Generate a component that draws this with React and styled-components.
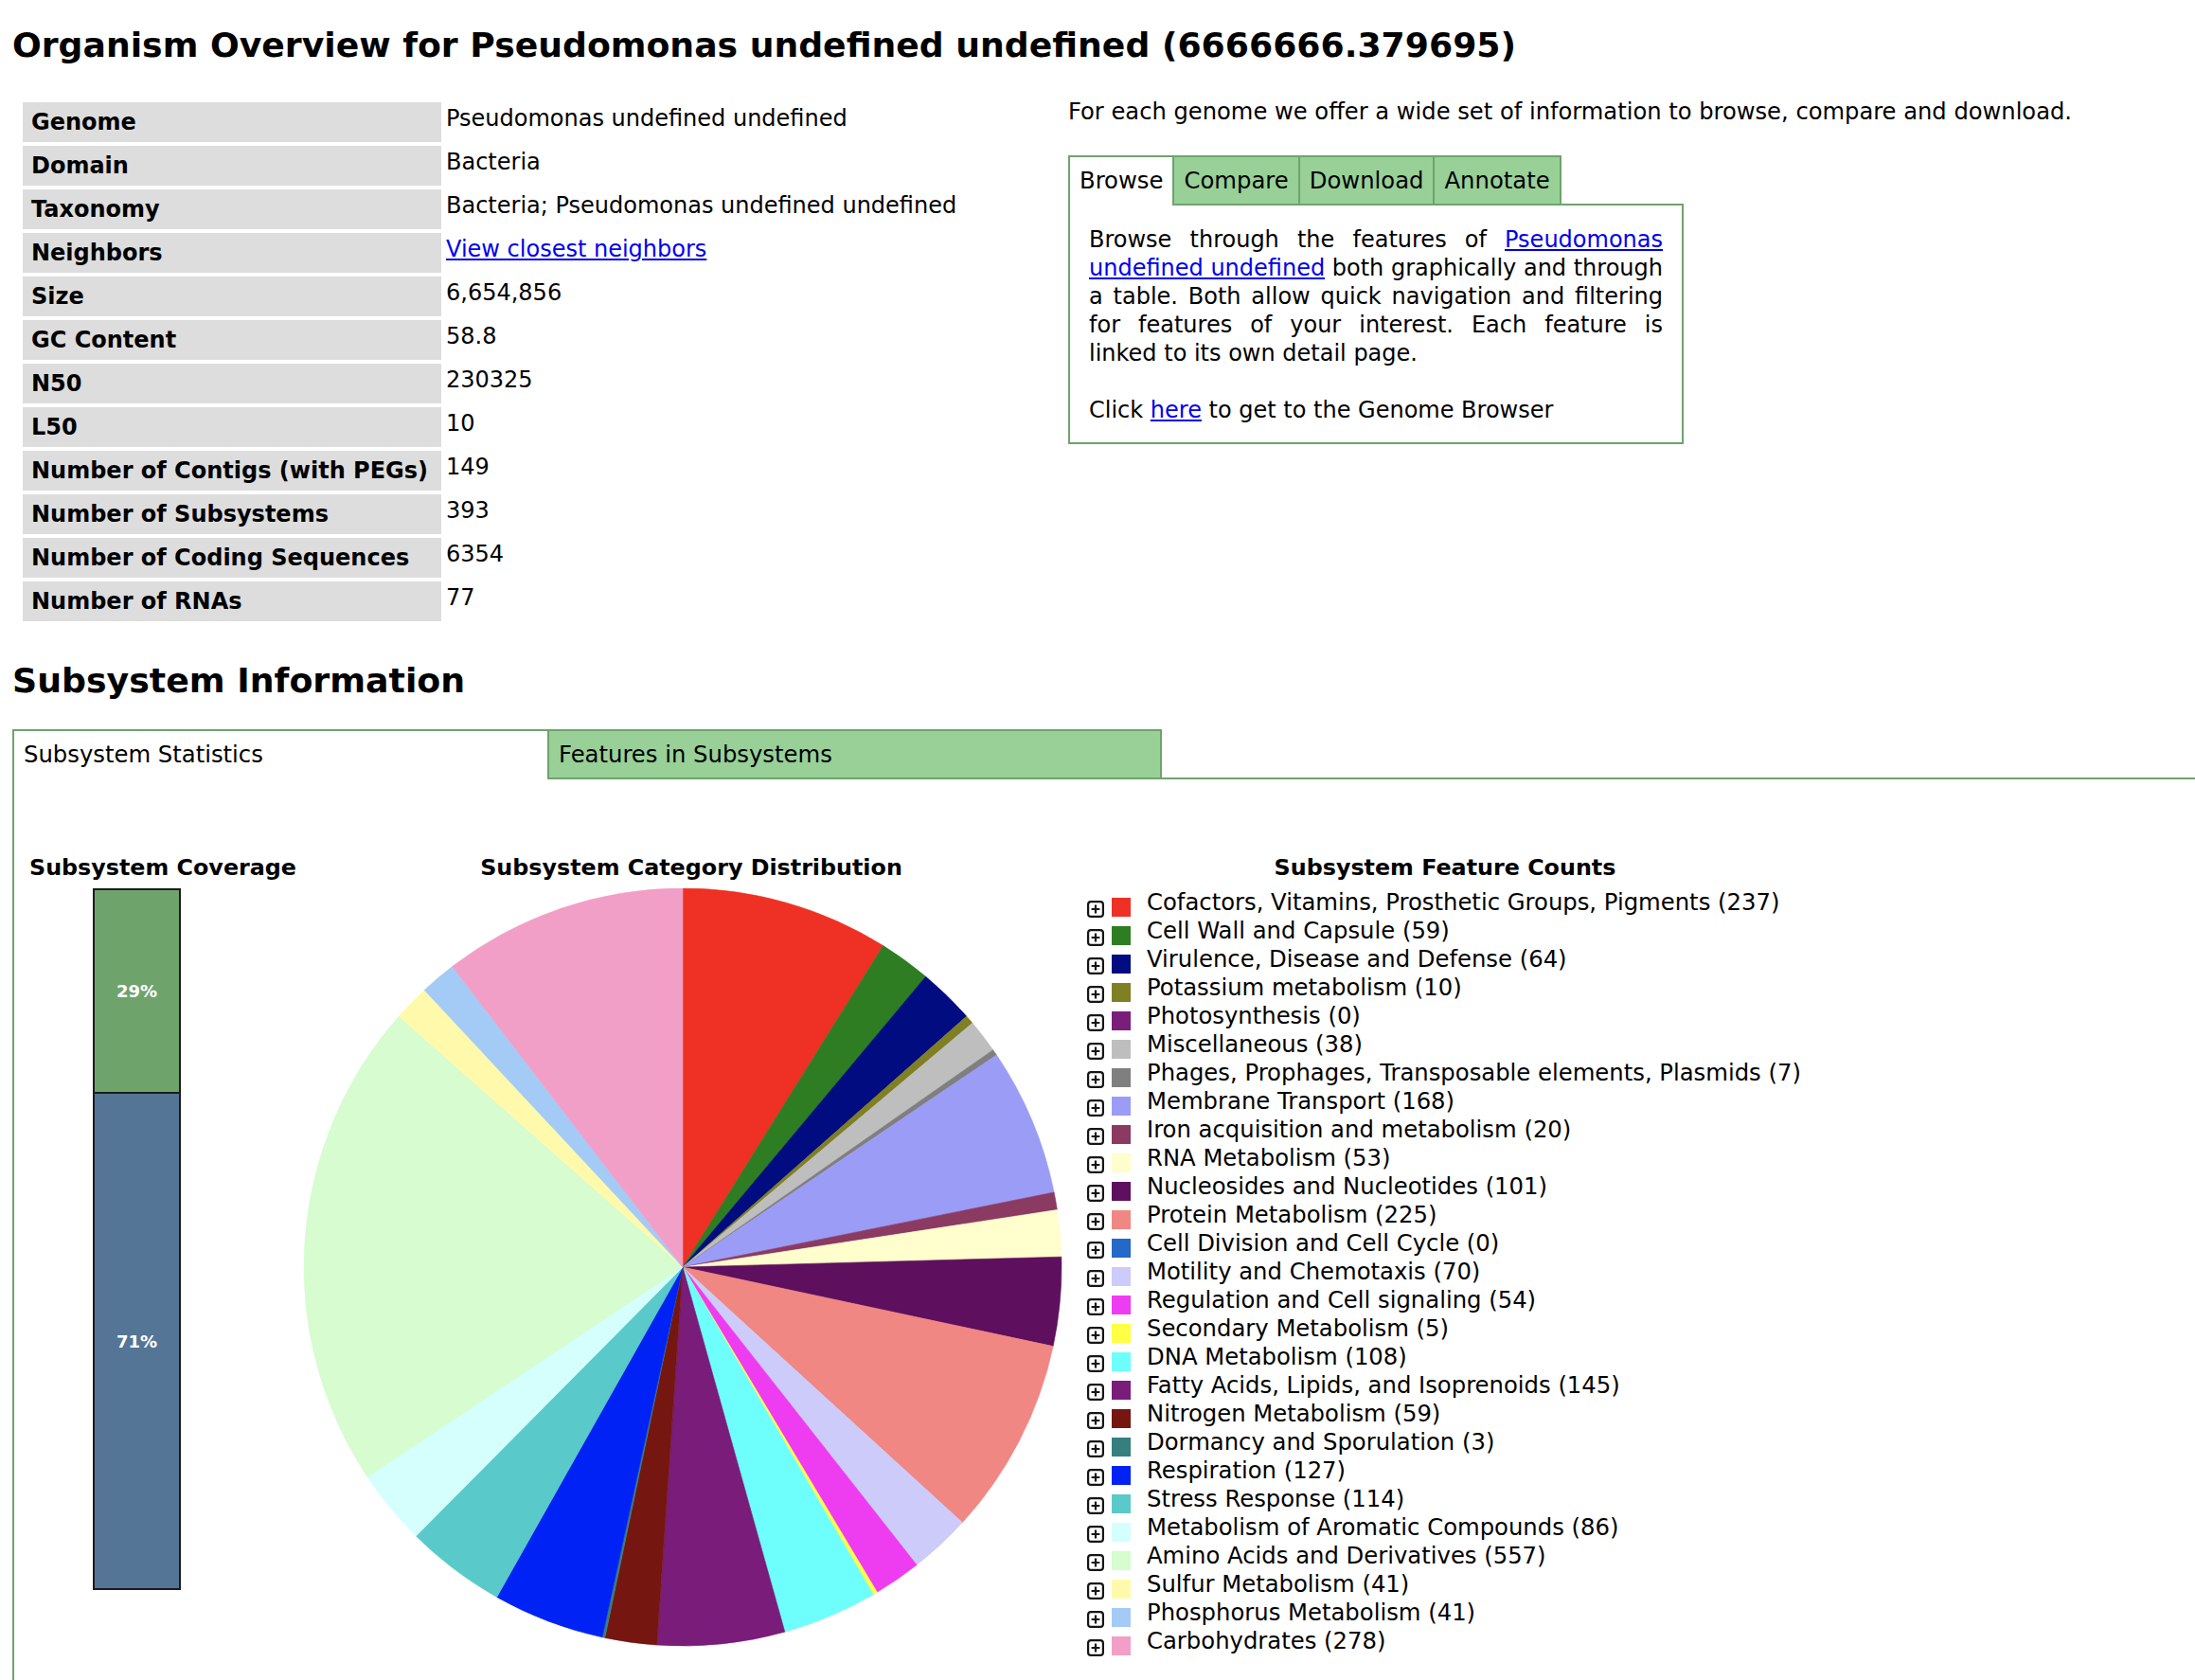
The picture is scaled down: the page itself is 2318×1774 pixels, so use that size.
import React from 'react';
import styled, { createGlobalStyle } from 'styled-components';

const GREEN_LINE = '#6fa36c';
const GREEN_TAB = '#98d098';

const GlobalStyle = createGlobalStyle`
	html, body {
		margin: 0;
		padding: 0;
		overflow: hidden;
		background: #fff;
	}
	body {
		font-family: "DejaVu Sans", Verdana, sans-serif;
		font-size: 24.2px;
		color: #000;
	}
	a {
		color: #0000ee;
		text-decoration: underline;
	}
`;

const overview = [
	['Genome', 'Pseudomonas undefined undefined'],
	['Domain', 'Bacteria'],
	['Taxonomy', 'Bacteria; Pseudomonas undefined undefined'],
	['Neighbors', <a href="#">View closest neighbors</a>],
	['Size', '6,654,856'],
	['GC Content', '58.8'],
	['N50', '230325'],
	['L50', '10'],
	['Number of Contigs (with PEGs)', '149'],
	['Number of Subsystems', '393'],
	['Number of Coding Sequences', '6354'],
	['Number of RNAs', '77'],
];

const categories = [
	{ name: 'Cofactors, Vitamins, Prosthetic Groups, Pigments', count: 237, color: '#ee3124' },
	{ name: 'Cell Wall and Capsule', count: 59, color: '#2e7d23' },
	{ name: 'Virulence, Disease and Defense', count: 64, color: '#000c7f' },
	{ name: 'Potassium metabolism', count: 10, color: '#7f7f23' },
	{ name: 'Photosynthesis', count: 0, color: '#7b1e7b' },
	{ name: 'Miscellaneous', count: 38, color: '#bebebe' },
	{ name: 'Phages, Prophages, Transposable elements, Plasmids', count: 7, color: '#7f7f7f' },
	{ name: 'Membrane Transport', count: 168, color: '#9b9cf6' },
	{ name: 'Iron acquisition and metabolism', count: 20, color: '#8b3a62' },
	{ name: 'RNA Metabolism', count: 53, color: '#fffecc' },
	{ name: 'Nucleosides and Nucleotides', count: 101, color: '#5e0f5e' },
	{ name: 'Protein Metabolism', count: 225, color: '#f08783' },
	{ name: 'Cell Division and Cell Cycle', count: 0, color: '#2468c8' },
	{ name: 'Motility and Chemotaxis', count: 70, color: '#cccbfa' },
	{ name: 'Regulation and Cell signaling', count: 54, color: '#ee3cf0' },
	{ name: 'Secondary Metabolism', count: 5, color: '#ffff44' },
	{ name: 'DNA Metabolism', count: 108, color: '#6efffd' },
	{ name: 'Fatty Acids, Lipids, and Isoprenoids', count: 145, color: '#7a1c7a' },
	{ name: 'Nitrogen Metabolism', count: 59, color: '#761610' },
	{ name: 'Dormancy and Sporulation', count: 3, color: '#367f7e' },
	{ name: 'Respiration', count: 127, color: '#0022f5' },
	{ name: 'Stress Response', count: 114, color: '#5ac9c9' },
	{ name: 'Metabolism of Aromatic Compounds', count: 86, color: '#d4fffd' },
	{ name: 'Amino Acids and Derivatives', count: 557, color: '#d6fcd0' },
	{ name: 'Sulfur Metabolism', count: 41, color: '#fffaab' },
	{ name: 'Phosphorus Metabolism', count: 41, color: '#a4cbf6' },
	{ name: 'Carbohydrates', count: 278, color: '#f19fc7' },
];

// pie drawn from the counts, clockwise from 12 o'clock
const PieChart = ({ data }) => {
	const total = data.reduce((s, d) => s + d.count, 0);
	const cx = 405;
	const cy = 400;
	const r = 400;
	let angle = 0;
	const point = (a) => `${(cx + r * Math.sin(a)).toFixed(2)} ${(cy - r * Math.cos(a)).toFixed(2)}`;

	return (
		<PieSvg width="828" height="802" viewBox="0 0 828 802">
			{data.map((d) => {
				const start = angle;
				angle += (d.count / total) * Math.PI * 2;
				if (!d.count) return null;
				const large = angle - start > Math.PI ? 1 : 0;
				return (
					<path
						key={d.name}
						d={`M${cx} ${cy} L${point(start)} A${r} ${r} 0 ${large} 1 ${point(angle)} Z`}
						fill={d.color}
						stroke={d.color}
						strokeWidth="0.6"
					/>
				);
			})}
		</PieSvg>
	);
};

const PlusIcon = () => (
	<ExpandIcon width="18" height="18" viewBox="0 0 18 18">
		<rect x="1.1" y="1.1" width="15.8" height="15.8" rx="3" fill="#fff" stroke="#151515" strokeWidth="2.2" />
		<path d="M4.6 9h8.8M9 4.6v8.8" stroke="#151515" strokeWidth="2.2" />
	</ExpandIcon>
);

const App = () => {
	return (
		<Page>
			<GlobalStyle />
			<Title>Organism Overview for Pseudomonas undefined undefined (6666666.379695)</Title>

			<Overview>
				<InfoTable>
					{overview.map(([label, value]) => (
						<React.Fragment key={label}>
							<Label>{label}</Label>
							<Value>{value}</Value>
						</React.Fragment>
					))}
				</InfoTable>

				<Side>
					<Intro>For each genome we offer a wide set of information to browse, compare and download.</Intro>
					<TabBar>
						<Tab $active>Browse</Tab>
						<Tab>Compare</Tab>
						<Tab>Download</Tab>
						<Tab>Annotate</Tab>
					</TabBar>
					<BrowsePanel>
						<Line $justify>
							Browse through the features of <a href="#">Pseudomonas</a>
						</Line>
						<Line $justify>
							<a href="#">undefined undefined</a> both graphically and through
						</Line>
						<Line $justify>a table. Both allow quick navigation and filtering</Line>
						<Line $justify>for features of your interest. Each feature is</Line>
						<Line>linked to its own detail page.</Line>
						<Line>&nbsp;</Line>
						<Line>
							Click <a href="#">here</a> to get to the Genome Browser
						</Line>
					</BrowsePanel>
				</Side>
			</Overview>

			<SectionTitle>Subsystem Information</SectionTitle>

			<SubsystemBox>
				<TabBar>
					<Tab $active $width={567}>Subsystem Statistics</Tab>
					<Tab $width={649}>Features in Subsystems</Tab>
				</TabBar>
				<SubsystemPanel>
					<Columns>
						<Column>
							<ColumnTitle>Subsystem Coverage</ColumnTitle>
							<CoverageBar>
								<Segment $share={29} $color="#6fa36c" $divider>29%</Segment>
								<Segment $share={71} $color="#557596">71%</Segment>
							</CoverageBar>
						</Column>
						<Column>
							<ColumnTitle>Subsystem Category Distribution</ColumnTitle>
							<PieChart data={categories} />
						</Column>
						<Column>
							<ColumnTitle>Subsystem Feature Counts</ColumnTitle>
							<Legend>
								{categories.map((c) => (
									<LegendRow key={c.name}>
										<PlusIcon />
										<Swatch $color={c.color} />
										<LegendText>
											{c.name} ({c.count})
										</LegendText>
									</LegendRow>
								))}
							</Legend>
						</Column>
					</Columns>
				</SubsystemPanel>
			</SubsystemBox>
		</Page>
	);
};

// CSS // CSS // CSS // CSS // CSS // CSS // CSS // CSS // CSS // CSS // CSS
const Page = styled.div`
	padding: 0 0 0 13px;
	width: 2318px;
	box-sizing: border-box;
`;

const Title = styled.h1`
	margin: 26px 0 35px;
	font-size: 36.2px;
	line-height: 43px;
	font-weight: bold;
`;

const Overview = styled.div`
	display: grid;
	grid-template-columns: 1115px auto;
	align-items: start;
`;

const InfoTable = styled.div`
	display: grid;
	grid-template-columns: 442px auto;
	grid-auto-rows: 42px;
	column-gap: 4px;
	row-gap: 4px;
	margin: 4px 0 0 11px;
	font-size: 24px;
`;

const Label = styled.div`
	display: flex;
	align-items: center;
	padding-left: 9px;
	background: #dddddd;
	font-weight: bold;
	white-space: nowrap;
`;

const Value = styled.div`
	padding: 3px 0 0 1px;
	white-space: nowrap;
`;

const Side = styled.div`
	width: 650px;
`;

const Intro = styled.p`
	margin: 0 0 32px;
	white-space: nowrap;
	line-height: 28px;
`;

const TabBar = styled.div`
	display: flex;
	align-items: flex-start;
`;

const Tab = styled.div`
	position: relative;
	z-index: ${(p) => (p.$active ? 1 : 0)};
	box-sizing: border-box;
	width: ${(p) => (p.$width ? `${p.$width}px` : 'auto')};
	margin-left: -2px;
	padding: 11px 10px ${(p) => (p.$active ? '12px' : '10px')};
	border: 2px solid ${GREEN_LINE};
	border-bottom-width: ${(p) => (p.$active ? 0 : '2px')};
	background: ${(p) => (p.$active ? '#fff' : GREEN_TAB)};
	font-size: 24.3px;
	line-height: 28px;
	white-space: nowrap;

	&:first-child {
		margin-left: 0;
	}
`;

const BrowsePanel = styled.div`
	box-sizing: border-box;
	width: 650px;
	margin-top: -2px;
	padding: 21px 20px 19px;
	border: 2px solid ${GREEN_LINE};
	font-size: 24px;
	line-height: 30px;
`;

const Line = styled.div`
	white-space: nowrap;
	text-align: ${(p) => (p.$justify ? 'justify' : 'left')};
	text-align-last: ${(p) => (p.$justify ? 'justify' : 'auto')};
`;

const SectionTitle = styled.h2`
	margin: 42px 0 30px;
	font-size: 36.3px;
	line-height: 42px;
	font-weight: bold;
`;

const SubsystemBox = styled.div`
	width: 2330px;
`;

const SubsystemPanel = styled.div`
	margin-top: -2px;
	padding: 81px 0 60px 13px;
	border-left: 2px solid ${GREEN_LINE};
	border-top: 2px solid ${GREEN_LINE};
`;

const Columns = styled.div`
	display: grid;
	grid-template-columns: 288px 828px 764px;
	align-items: start;
`;

const Column = styled.div`
	display: flex;
	flex-direction: column;
`;

const ColumnTitle = styled.div`
	margin-bottom: 10px;
	font-size: 23.8px;
	line-height: 24px;
	font-weight: bold;
	text-align: center;
	white-space: nowrap;
`;

const CoverageBar = styled.div`
	box-sizing: border-box;
	display: flex;
	flex-direction: column;
	width: 93px;
	height: 741px;
	margin-left: 70px;
	border: 2px solid #1c1c1c;
`;

const Segment = styled.div`
	flex: ${(p) => p.$share} 1 0;
	display: flex;
	align-items: center;
	justify-content: center;
	background: ${(p) => p.$color};
	border-bottom: ${(p) => (p.$divider ? '2px solid #1c1c1c' : 'none')};
	color: #fff;
	font-size: 18px;
	font-weight: bold;
`;

const PieSvg = styled.svg`
	display: block;
`;

const Legend = styled.div`
	display: flex;
	flex-direction: column;
	padding-left: 4px;
`;

const LegendRow = styled.div`
	display: flex;
	align-items: flex-start;
	height: 30px;
`;

const ExpandIcon = styled.svg`
	flex: none;
	margin-top: 13px;
`;

const Swatch = styled.span`
	flex: none;
	width: 20px;
	height: 20px;
	margin: 9.5px 0 0 8px;
	background: ${(p) => p.$color};
`;

const LegendText = styled.span`
	margin-left: 17px;
	font-size: 24.3px;
	line-height: 30px;
	white-space: nowrap;
`;

export default App;
